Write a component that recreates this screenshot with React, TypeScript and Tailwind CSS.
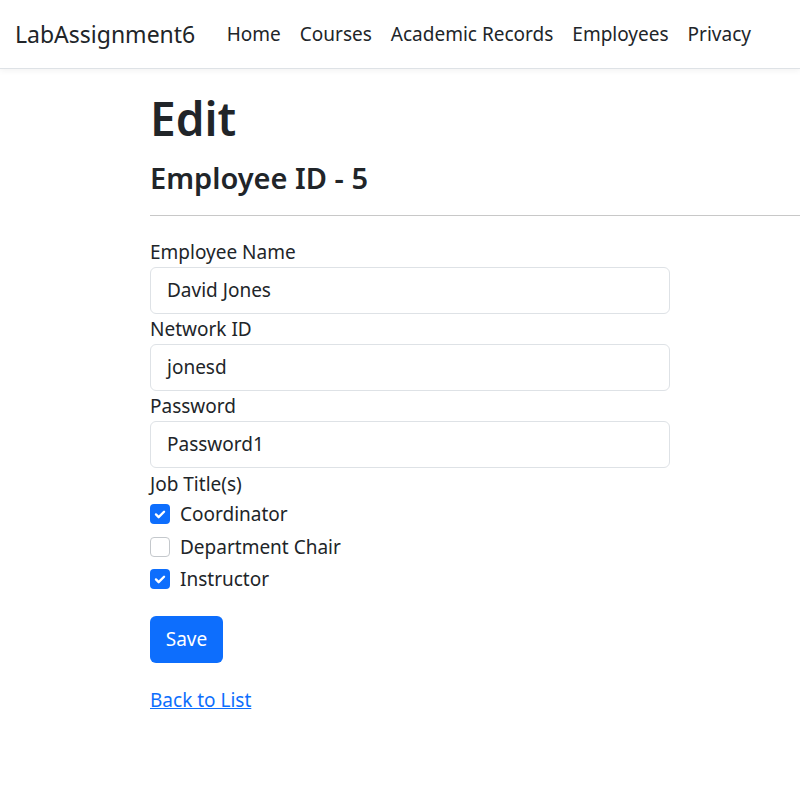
import { useState } from "react";

const font = { fontFamily: '"Segoe UI", "Noto Sans", "Liberation Sans", sans-serif' };

function Check({ checked, label }: { checked: boolean; label: string }) {
    return (
        <div className="flex items-center h-[32.5px]">
            {checked ? (
                <span className="w-[20px] h-[20px] rounded-[4px] bg-[#0d6efd] flex items-center justify-center">
                    <svg width="18" height="18" viewBox="0 0 20 20">
                        <path d="M5.5 10.5l3 3 6-6" fill="none" stroke="#fff" strokeWidth="2.6" strokeLinecap="round" strokeLinejoin="round" />
                    </svg>
                </span>
            ) : (
                <span className="w-[20px] h-[20px] rounded-[4px] border border-[#c4c8cc] bg-white" />
            )}
            <span className="ml-[10px] text-[19px] text-[#212529]">{label}</span>
        </div>
    );
}

function Field({ label, value }: { label: string; value: string }) {
    return (
        <div className="flex flex-col mb-[3px]">
            <label className="text-[19px] leading-[24px] mb-[3px] text-[#212529]">{label}</label>
            <div className="w-[520px] h-[47px] border border-[#dee2e6] rounded-[6px] px-[16px] flex items-center text-[19px] text-[#212529]">
                {value}
            </div>
        </div>
    );
}

export default function App() {
    const [links] = useState(["Home", "Courses", "Academic Records", "Employees", "Privacy"]);
    return (
        <div className="min-h-[787px] bg-white text-[#212529]" style={font}>
            <nav className="h-[69px] border-b border-[#dee2e6] shadow-[0_2px_6px_rgba(0,0,0,0.05)] flex items-center pl-[15px]">
                <span className="text-[23px] mr-[22px]">LabAssignment6</span>
                {links.map((l) => (
                    <span key={l} className="text-[19px] px-[9.5px]">{l}</span>
                ))}
            </nav>

            <main className="pl-[150px] pt-[22px]">
                <h1 className="text-[46px] font-semibold leading-[54px]">Edit</h1>
                <h4 className="text-[29px] font-semibold leading-[34px] mt-[16px]">Employee ID - 5</h4>
                <hr className="border-t border-[#c8c8c8] mt-[20px] mb-[24px]" />

                <div className="flex flex-col">
                    <Field label="Employee Name" value="David Jones" />
                    <Field label="Network ID" value="jonesd" />
                    <Field label="Password" value="Password1" />
                    <div className="text-[19px] leading-[24px] mt-[1px] mb-[2px]">Job Title(s)</div>
                    <Check checked label="Coordinator" />
                    <Check checked={false} label="Department Chair" />
                    <Check checked label="Instructor" />
                </div>

                <button className="mt-[20px] w-[73px] h-[47px] rounded-[6px] bg-[#0d6efd] text-white text-[19px]">Save</button>

                <div className="mt-[23px]">
                    <a href="#" className="text-[19px] text-[#0d6efd] underline">Back to List</a>
                </div>
            </main>
        </div>
    );
}
